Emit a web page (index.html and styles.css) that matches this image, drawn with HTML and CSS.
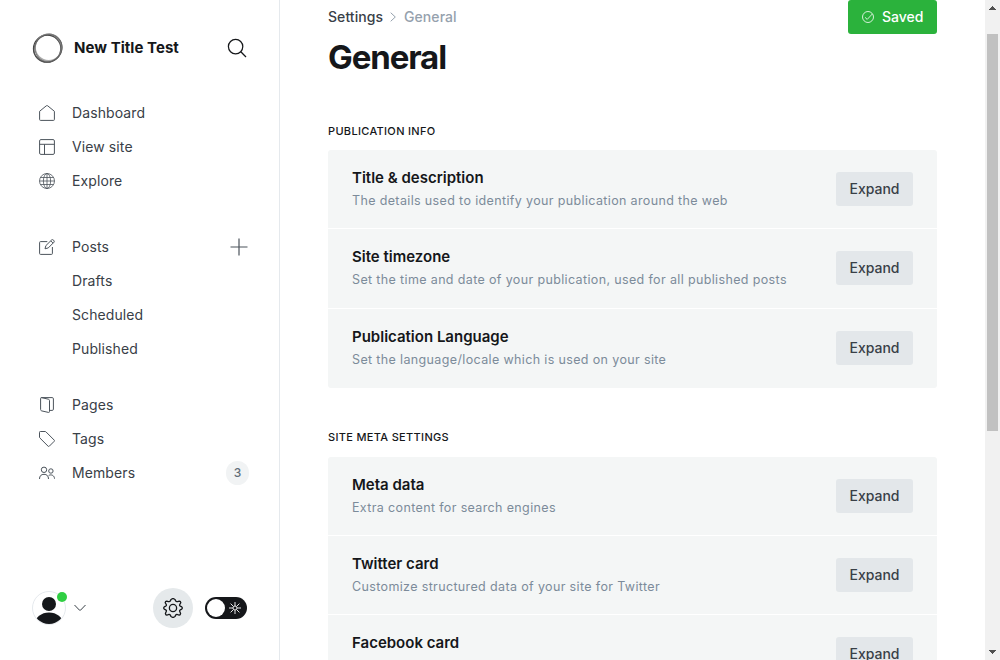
FILE: index.html
```html
<!DOCTYPE html>
<html lang="en">
<head>
<meta charset="utf-8">
<title>Settings - General</title>
<link rel="stylesheet" href="styles.css">
</head>
<body>
<div class="app">
  <aside class="sidebar">
    <header class="brand">
      <svg class="brand-logo" viewBox="0 0 32 32" fill="none">
        <ellipse cx="15.2" cy="16.7" rx="13.7" ry="13.5" stroke="#444" stroke-width="1.3"/>
        <ellipse cx="16.4" cy="15.7" rx="13.3" ry="13.9" stroke="#777" stroke-width="1.1" transform="rotate(24 16 16)"/>
        <ellipse cx="16.6" cy="15.4" rx="13.3" ry="13.2" stroke="#888" stroke-opacity=".7" stroke-width="1.2"/>
        <ellipse cx="15.7" cy="16.4" rx="14.4" ry="13.2" stroke="#555" stroke-opacity=".8" stroke-width="1" transform="rotate(-38 16 16)"/>
        <path d="M17 1.8C25 2 30.500 8 30 16C29.500 20.500 26.500 25.500 23 27.300C27.500 23 28.800 18 28 13C27 8.500 24 5 17 1.800Z" fill="#777" fill-opacity=".6"/>
      </svg>
      <span class="brand-name">New Title Test</span>
      <svg class="icon-search" viewBox="0 0 20 20" fill="none" stroke="#15171a" stroke-width="1.25"><circle cx="8.600" cy="8.600" r="7.200"/><path d="M13.800 13.800L19 19"/></svg>
    </header>
    <nav class="nav">
      <ul class="nav-group">
        <li class="nav-item"><svg class="nav-icon" viewBox="0 0 16 16"><path d="M.6 6.300V14.500Q.6 15.400 1.500 15.400H14.500Q15.400 15.400 15.400 14.500V6.300L8.700.8Q8 .3 7.300.8Z"/></svg>Dashboard</li>
        <li class="nav-item"><svg class="nav-icon" viewBox="0 0 16 16"><rect x=".6" y=".6" width="14.800" height="14.800" rx="1.300"/><path d="M.6 5.300H15.400M5.500 5.300V15.400"/></svg>View site</li>
        <li class="nav-item"><svg class="nav-icon icon-globe" viewBox="0 0 16 16"><circle cx="8" cy="8" r="7.500"/><ellipse cx="8" cy="8" rx="3.600" ry="7.500"/><path d="M.5 8H15.500M1.500 4.500H14.500M1.500 11.500H14.500M8 .5V15.500"/></svg>Explore</li>
      </ul>
      <ul class="nav-group">
        <li class="nav-item"><svg class="nav-icon" viewBox="0 0 16 16"><path d="M8.300 2.600H1.500Q.6 2.600.6 3.500V14.500Q.6 15.400 1.500 15.400H12.500Q13.400 15.400 13.400 14.500V8M9.300 8.900L6 9.800L6.900 6.600L12.700.9Q13.600.2 14.600 1.200Q15.700 2.200 15 3.200ZM11.800 1.900L14 4.100"/></svg>Posts
          <svg class="icon-plus" viewBox="0 0 18 18"><path d="M9 .5V17.500M.5 9H17.500"/></svg></li>
        <li class="nav-item nav-sub">Drafts</li>
        <li class="nav-item nav-sub">Scheduled</li>
        <li class="nav-item nav-sub">Published</li>
      </ul>
      <ul class="nav-group">
        <li class="nav-item"><svg class="nav-icon" viewBox="0 0 16 16"><path d="M2.300.6H13.200Q14.400.6 14.400 1.800V12.200Q14.400 13.400 13.200 13.400H10.500M1.600 1.300Q1.600.4 2.800.7L9.400 2.200Q10.500 2.500 10.500 3.600V14.500Q10.500 15.700 9.400 15.400L2.700 13.900Q1.600 13.600 1.600 12.500Z"/></svg>Pages</li>
        <li class="nav-item"><svg class="nav-icon" viewBox="0 0 16 16"><path d="M.5 1.300Q.5.500 1.300.500H6.100Q6.600.500 7 .9L15.200 9.100Q15.800 9.700 15.200 10.300L10.300 15.200Q9.700 15.800 9.100 15.200L.9 7Q.5 6.600.5 6.100Z"/></svg>Tags</li>
        <li class="nav-item"><svg class="nav-icon" viewBox="0 0 16 16"><circle cx="5" cy="4.800" r="2.700"/><path d="M.5 14C.5 10.900 2.200 9.300 5 9.300S9.500 10.900 9.500 14"/><circle cx="11.900" cy="6" r="2.200"/><path d="M9.700 10.400C12.600 9 15.500 10.700 15.500 13.700"/></svg>Members
          <span class="count">3</span></li>
      </ul>
    </nav>
    <footer class="sidebar-footer">
      <div class="avatar">
        <svg viewBox="0 0 34 34"><defs><clipPath id="avatar-clip"><circle cx="17" cy="17" r="16"/></clipPath></defs><circle cx="17" cy="17" r="16.500" fill="#fff" stroke="#e5e9ed"/><g clip-path="url(#avatar-clip)" fill="#15171a"><circle cx="17" cy="13" r="7"/><ellipse cx="17" cy="33" rx="14" ry="11.500"/></g></svg>
        <span class="status-dot"></span>
      </div>
      <svg class="icon-chevron" viewBox="0 0 12 8" fill="none" stroke="#394047"><path d="M.5 1L5.500 6.200Q6 6.700 6.500 6.200L11.500 1"/></svg>
      <div class="settings">
        <svg viewBox="-10.500 -10.500 21 21" fill="none" stroke="#15171a" stroke-width="1.350" stroke-linejoin="round"><circle r="3.800"/><path d="M-2.200-8.800Q0-10.900 2.200-8.800L2.800-7.500Q3.500-6.300 5-6.800L6.500-7.300Q8-7.400 8.200-5.700L7.100-3.700Q6.500-2.500 7.700-1.900L9.200-1.200Q10.300 0 9.200 1.200L7.700 1.900Q6.500 2.500 7.100 3.700L8 5.700Q7.800 7.500 6.500 7.400L5 6.900Q3.500 6.300 2.800 7.500L2.200 8.800Q0 10.900-2.200 8.800L-2.800 7.500Q-3.500 6.300-5 6.900L-6.500 7.400Q-7.800 7.500-8 5.700L-7.100 3.700Q-6.500 2.500-7.700 1.900L-9.200 1.200Q-10.300 0-9.200-1.200L-7.700-1.900Q-6.500-2.500-7.100-3.700L-8.200-5.700Q-8-7.400-6.500-7.300L-5-6.800Q-3.500-6.300-2.800-7.500Z"/></svg>
      </div>
      <div class="theme-toggle"><span class="toggle-knob"></span>
        <svg class="icon-sun" viewBox="0 0 12 12" fill="none" stroke="#fff" stroke-width=".9"><circle cx="6" cy="6" r="2"/><path d="M6 0V4M6 8V12M0 6H4M8 6H12M1.600 1.600L4.300 4.300M7.700 7.700L10.400 10.400M10.400 1.600L7.700 4.300M4.300 7.700L1.600 10.400"/></svg></div>
    </footer>
  </aside>

  <main class="main">
    <header class="page-header">
      <div>
        <div class="breadcrumb"><span>Settings</span><svg viewBox="0 0 6 10" fill="none" stroke="#95a1ad"><path d="M.7.7L5.300 5L.7 9.300"/></svg><span class="crumb-current">General</span></div>
        <h1 class="page-title">General</h1>
      </div>
      <button class="save-button"><svg viewBox="0 0 12 12" fill="none" stroke="#fff" stroke-width=".8"><circle cx="6" cy="6" r="5.500"/><path d="M3 6.300L5.200 8.400L10.300 3"/></svg>Saved</button>
    </header>

    <h2 class="section-title">Publication info</h2>
    <section class="panel">
      <div class="row"><div><h3 class="row-title">Title &amp; description</h3><p class="row-text">The details used to identify your publication around the web</p></div><button class="expand">Expand</button></div>
      <div class="row"><div><h3 class="row-title">Site timezone</h3><p class="row-text">Set the time and date of your publication, used for all published posts</p></div><button class="expand">Expand</button></div>
      <div class="row"><div><h3 class="row-title">Publication Language</h3><p class="row-text">Set the language/locale which is used on your site</p></div><button class="expand">Expand</button></div>
    </section>

    <h2 class="section-title">Site meta settings</h2>
    <section class="panel">
      <div class="row"><div><h3 class="row-title">Meta data</h3><p class="row-text">Extra content for search engines</p></div><button class="expand">Expand</button></div>
      <div class="row"><div><h3 class="row-title">Twitter card</h3><p class="row-text">Customize structured data of your site for Twitter</p></div><button class="expand">Expand</button></div>
      <div class="row"><div><h3 class="row-title">Facebook card</h3></div><button class="expand">Expand</button></div>
    </section>
  </main>

  <div class="scrollbar">
    <svg class="scroll-arrow" viewBox="0 0 7 4" shape-rendering="crispEdges"><path d="M0 4L3.500 0L7 4Z"/></svg>
    <div class="scroll-track"><div class="scroll-thumb"></div></div>
    <svg class="scroll-arrow" viewBox="0 0 7 4" shape-rendering="crispEdges"><path d="M0 0L3.500 4L7 0Z"/></svg>
  </div>
</div>
</body>
</html>
```
FILE: styles.css
```css
* { box-sizing: border-box; }
body {
  margin: 0;
  background: #fff;
  color: #15171a;
  font-family: Inter, "Liberation Sans", sans-serif;
  overflow: hidden;
}
h1, h2, h3, p, ul { margin: 0; padding: 0; }
button { border: 0; font: inherit; }
svg { display: block; flex: none; }

.app { display: flex; height: 660px; overflow: hidden; }

.sidebar {
  display: flex;
  flex-direction: column;
  flex: none;
  width: 280px;
  border-right: 1px solid #e5e9ed;
}
.brand { display: flex; align-items: center; height: 96px; padding: 0 32px; }
.brand-logo { width: 32px; height: 32px; }
.brand-name { flex: 1; margin-left: 10px; font-size: 15px; font-weight: 700; line-height: 20px; letter-spacing: .04px; white-space: nowrap; }
.icon-search { width: 20px; height: 20px; }

.nav { flex: 1; }
.nav-group { list-style: none; }
.nav-group:nth-child(2) { margin-top: 32px; }
.nav-group:nth-child(3) { margin-top: 22px; }
.nav-item {
  display: flex;
  align-items: center;
  height: 34px;
  padding: 0 30px 0 39px;
  color: #394047;
  font-size: 14px;
  line-height: 16px;
  letter-spacing: .1px;
}
.nav-icon { width: 16px; height: 16px; margin-right: 17px; fill: none; stroke: #4b535b; }
.icon-globe { stroke-width: .8; }
.nav-sub { padding-left: 72px; }
.icon-plus { width: 18px; height: 18px; margin-left: auto; margin-right: 1px; stroke: #4b535b; stroke-width: 1.2; }
.count {
  width: 23px;
  height: 24px;
  margin-left: auto;
  border-radius: 12px;
  background: #f1f3f4;
  color: #626d79;
  font-size: 12px;
  font-weight: 500;
  line-height: 24px;
  text-align: center;
}

.sidebar-footer { display: flex; align-items: center; height: 104px; padding: 0 32px; }
.avatar { position: relative; width: 34px; height: 34px; }
.status-dot {
  position: absolute;
  top: 1px;
  right: -1px;
  width: 10px;
  height: 10px;
  border-radius: 50%;
  background: #30cf43;
}
.icon-chevron { width: 12px; height: 8px; margin-left: 8px; }
.settings {
  display: grid;
  place-items: center;
  width: 40px;
  height: 40px;
  margin-left: auto;
  border-radius: 50%;
  background: #e5e9eb;
}
.settings svg { width: 20px; height: 20px; }
.theme-toggle {
  display: flex;
  align-items: center;
  justify-content: space-between;
  width: 42px;
  height: 22px;
  margin-left: 12px;
  padding: 0 6px 0 2px;
  border-radius: 11px;
  background: #15171a;
}
.toggle-knob { width: 18px; height: 18px; border-radius: 50%; background: #fff; }
.icon-sun { width: 12px; height: 12px; }

.main { flex: 1; padding: 0 48px; }
.page-header { display: flex; align-items: flex-start; justify-content: space-between; height: 121px; }
.breadcrumb {
  display: flex;
  align-items: center;
  height: 34px;
  color: #394047;
  font-size: 14px;
  line-height: 16px;
  font-weight: 500;
  letter-spacing: .06px;
}
.breadcrumb svg { width: 6px; height: 10px; margin: 0 8px 0 7px; }
.crumb-current { color: #95a1ad; }
.page-title { font-size: 33px; font-weight: 700; line-height: 40px; margin-top: 3px; letter-spacing: -1.1px; }
.save-button {
  display: flex;
  align-items: center;
  width: 89px;
  height: 34px;
  padding: 0 0 0 14px;
  border-radius: 3px;
  background: #2bb23c;
  color: #fff;
  font-size: 14px;
  font-weight: 500;
  line-height: 16px;
}
.save-button svg { width: 12px; height: 12px; margin-right: 8px; }

.section-title {
  height: 20px;
  margin-bottom: 9px;
  font-size: 11px;
  font-weight: 500;
  line-height: 20px;
  letter-spacing: .32px;
  text-transform: uppercase;
}
.panel { margin-bottom: 39px; border-radius: 3px; background: #f4f6f6; }
.panel + .section-title { margin-bottom: 9.6px; }
.row {
  display: flex;
  align-items: flex-start;
  justify-content: space-between;
  height: 79.330px;
  padding: 17px 24px 0;
  border-bottom: 1px solid #fff;
}
.row:last-child { border-bottom: 0; }
.row-title { font-size: 15px; font-weight: 600; line-height: 22px; }
.row-text { margin-top: 1px; color: #7c8b9a; font-size: 12.5px; line-height: 22px; letter-spacing: .36px; }
.expand {
  width: 77px;
  height: 34px;
  margin-top: 5px;
  padding: 0;
  border-radius: 3px;
  background: #e3e7ea;
  color: #394047;
  font-size: 14px;
  font-weight: 500;
  line-height: 16px;
}

.scrollbar {
  display: flex;
  flex-direction: column;
  align-items: center;
  flex: none;
  width: 15px;
  padding: 6px 0;
  background: #f1f1f1;
}
.scroll-arrow { width: 7px; height: 4px; fill: #505050; }
.scroll-track { flex: 1; padding-top: 24px; }
.scroll-thumb { width: 11px; height: 397px; background: #c1c1c1; }
```
